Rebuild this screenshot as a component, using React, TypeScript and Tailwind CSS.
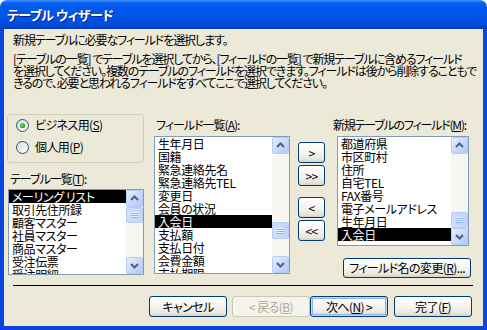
import React from 'react';

const Mn = ({ c }: { c: string }) => <span className="underline underline-offset-[1px]">{c}</span>;

const Radio = ({ on }: { on?: boolean }) => (
  <svg width="13" height="13" viewBox="0 0 13 13">
    <defs>
      <linearGradient id="rbg" x1="0" y1="0" x2="1" y2="1">
        <stop offset="0" stopColor="#dcdcd7" />
        <stop offset="1" stopColor="#ffffff" />
      </linearGradient>
      <radialGradient id="rdot" cx="0.4" cy="0.4" r="0.6">
        <stop offset="0" stopColor="#7be06f" />
        <stop offset="1" stopColor="#1f9a1f" />
      </radialGradient>
    </defs>
    <circle cx="6.5" cy="6.5" r="6" fill="url(#rbg)" stroke="#1c5180" />
    {on && <circle cx="6.5" cy="6.5" r="2.6" fill="url(#rdot)" />}
  </svg>
);

const Chevron = ({ up }: { up?: boolean }) => (
  <svg width="15" height="15" viewBox="0 0 15 15">
    <path d={up ? 'M4 9 L7.5 5.5 L11 9' : 'M4 6 L7.5 9.5 L11 6'} fill="none" stroke="#4d6185" strokeWidth="2" />
  </svg>
);

const ScrollBtn = ({ up }: { up?: boolean }) => (
  <div className="h-[17px] flex items-center justify-center rounded-[2px] border border-[#b8cbf5] bg-[linear-gradient(135deg,#e6eefe_0%,#c6d6fb_60%,#b4c8f6_100%)]">
    <Chevron up={up} />
  </div>
);

const Thumb = ({ h }: { h: string }) => (
  <div className={`${h} flex flex-col items-center justify-center rounded-[2px] border border-[#b8cbf5] bg-[linear-gradient(90deg,#d0ddfc_0%,#c2d3fb_100%)]`}>
    <div className="w-[7px] h-px bg-[#eef4fe]" />
    <div className="w-[7px] h-px bg-[#8cb0f8]" />
    <div className="w-[7px] h-px bg-[#eef4fe]" />
    <div className="w-[7px] h-px bg-[#8cb0f8]" />
    <div className="w-[7px] h-px bg-[#eef4fe]" />
    <div className="w-[7px] h-px bg-[#8cb0f8]" />
  </div>
);

type ListProps = {
  items: string[];
  sel: number;
  className: string;
  before: string;
  thumb: string;
};

const ListBox = ({ items, sel, className, before, thumb }: ListProps) => (
  <div className={`flex border border-[#7f9db9] bg-white ${className}`}>
    <div className="flex-1 overflow-hidden">
      {items.map((t, i) => (
        <div
          key={i}
          className={`h-[13px] leading-[13px] pl-[3px] whitespace-nowrap text-[12px] tracking-[-0.4px] ${i === sel ? 'bg-black text-white' : ''}`}
        >
          {t}
        </div>
      ))}
    </div>
    <div className="w-[17px] flex flex-col bg-[#f7f6f0]">
      <ScrollBtn up />
      <div className="flex-1 flex flex-col">
        <div className={before} />
        <Thumb h={thumb} />
      </div>
      <ScrollBtn />
    </div>
  </div>
);

const Btn = ({
  children,
  className = '',
  disabled,
  def,
}: {
  children: React.ReactNode;
  className?: string;
  disabled?: boolean;
  def?: boolean;
}) => (
  <div
    className={`flex items-center justify-center rounded-[3px] border text-[12px] leading-none whitespace-nowrap tracking-[-0.6px] ${
      disabled
        ? 'border-[#c9c7ba] bg-[#f5f4ea] text-[#aca899]'
        : 'border-[#003c74] bg-[linear-gradient(180deg,#ffffff_0%,#f4f3ee_55%,#e6e3da_88%,#d6d0c5_100%)] text-black'
    } ${def ? 'shadow-[inset_0_0_0_1px_#c4dafb,inset_0_0_0_2px_#8eb1ea]' : ''} ${className}`}
  >
    {children}
  </div>
);

const tables = ['メーリング リスト', '取引先住所録', '顧客マスター', '社員マスター', '商品マスター', '受注伝票', '受注明細'];
const fields = ['生年月日', '国籍', '緊急連絡先名', '緊急連絡先TEL', '変更日', '会員の状況', '入会日', '支払額', '支払日付', '会費金額', '支払期限'];
const picked = ['都道府県', '市区町村', '住所', '自宅TEL', 'FAX番号', '電子メールアドレス', '生年月日', '入会日'];

export default function App() {
  return (
    <div className="w-[487px] h-[330px] flex flex-col bg-white text-black font-['Noto_Sans_CJK_JP','Noto_Sans_CJK_SC',sans-serif] [font-feature-settings:'palt']">
      <div className="h-[29px] shrink-0 flex items-center pl-[7px] rounded-t-[7px] bg-[linear-gradient(180deg,#3d90f8_0%,#0a60f0_10%,#0058ee_25%,#0055e5_60%,#0049d8_88%,#003cb8_100%)]">
        <span className="text-white font-bold text-[13px] tracking-[-0.5px] [text-shadow:1px_1px_0_#0a1e8a]">テーブル ウィザード</span>
      </div>

      <div className="flex-1 flex flex-col bg-[#ece9d8] border-x-4 border-b-4 border-[#0a46dd] text-[12px]">
        <div className="pl-[9px] pt-[5px] leading-[12px] whitespace-nowrap tracking-[-1.1px]">
          <p>新規テーブルに必要なフィールドを選択します。</p>
          <p className="mt-[7px]">
            [テーブルの一覧] でテーブルを選択してから、[フィールドの一覧] で新規テーブルに含めるフィールド
            <br />
            を選択してください。複数のテーブルのフィールドを選択できます。フィールドは後から削除することもで
            <br />
            きるので、必要と思われるフィールドをすべてここで選択してください。
          </p>
        </div>

        <div className="flex mt-[25px] pl-[3px]">
          <div className="w-[137px] flex flex-col">
            <div className="h-[49px] rounded-[3px] border border-[#d0d0bf] flex flex-col pl-[8px] pt-[2px] gap-[6px] tracking-[-0.6px]">
              <div className="h-[16px] flex items-center gap-[6px]">
                <Radio on />
                <span>ビジネス用(<Mn c="S" />)</span>
              </div>
              <div className="h-[16px] flex items-center gap-[6px]">
                <Radio />
                <span>個人用(<Mn c="P" />)</span>
              </div>
            </div>
            <div className="mt-[10px] pl-[3px] h-[12px] leading-[12px] tracking-[-1px]">
              テーブル一覧(<Mn c="T" />):
            </div>
            <ListBox items={tables} sel={0} className="mt-[4px] ml-[1px] h-[86px]" before="h-0" thumb="h-[16px]" />
          </div>

          <div className="ml-[10px] w-[136px] flex flex-col">
            <div className="mt-[5px] pl-[2px] h-[12px] leading-[12px] tracking-[-1px]">
              フィールド一覧(<Mn c="A" />):
            </div>
            <ListBox items={fields} sel={6} className="mt-[5px] h-[138px]" before="h-[68px]" thumb="h-[17px]" />
          </div>

          <div className="ml-[8px] w-[27px] flex flex-col pt-[28px]">
            <Btn className="h-[21px]">&gt;</Btn>
            <Btn className="h-[21px] mt-[2px]">&gt;&gt;</Btn>
            <Btn className="h-[21px] mt-[11px]">&lt;</Btn>
            <Btn className="h-[21px] mt-[2px]">&lt;&lt;</Btn>
          </div>

          <div className="ml-[8px] w-[140px] flex flex-col">
            <div className="mt-[5px] h-[12px] leading-[12px] whitespace-nowrap tracking-[-1.2px]">
              新規テーブルのフィールド(<Mn c="M" />):
            </div>
            <ListBox items={picked} sel={7} className="mt-[5px] ml-[4px] w-[132px] h-[110px]" before="h-[58px]" thumb="h-[16px]" />
            <Btn className="mt-[12px] ml-[10px] w-[128px] h-[20px]">
              フィールド名の変更(<Mn c="R" />)...
            </Btn>
          </div>
        </div>

        <div className="mt-[7px] ml-[9px] w-[460px] h-px bg-black" />

        <div className="mt-[10px] flex justify-end pr-[11px]">
          <Btn className="w-[78px] h-[21px]">キャンセル</Btn>
          <Btn disabled className="ml-[5px] w-[78px] h-[21px]">
            &lt; 戻る(<Mn c="B" />)
          </Btn>
          <Btn def className="w-[78px] h-[21px]">
            次へ(<Mn c="N" />) &gt;
          </Btn>
          <Btn className="ml-[6px] w-[78px] h-[21px]">
            完了(<Mn c="F" />)
          </Btn>
        </div>
      </div>
    </div>
  );
}
